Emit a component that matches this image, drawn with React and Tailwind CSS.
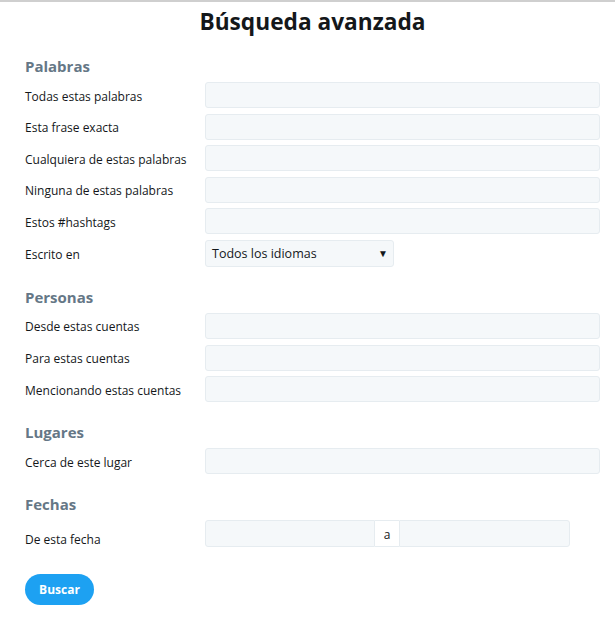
import React from "react";

const Field = ({ label }) => (
  <div className="flex items-center h-[26px]">
    <label className="w-[180px] shrink-0 pt-[3px] text-[12px] text-[#14171a]">{label}</label>
    <input
      type="text"
      className="flex-1 h-[26px] bg-[#f5f8fa] border border-[#e6ecf0] rounded-[3px] outline-none px-2 text-[12px]"
    />
  </div>
);

const Section = ({ title, children, first }) => (
  <section className={first ? "" : "mt-5"}>
    <h2 className="text-[15px] leading-[20px] font-bold text-[#657786] mb-[6px]">{title}</h2>
    <div className="flex flex-col gap-[5.6px]">{children}</div>
  </section>
);

const App = () => {
  return (
    <div
      className="min-h-screen bg-white border-t-2 border-[#cfcfcf]"
      style={{ fontFamily: '"Open Sans", "Noto Sans", sans-serif' }}
    >
      {/* Header */}
      <h1 className="mt-[6px] pl-[10px] text-center text-[22.7px] leading-[28px] font-bold text-[#14171a]">
        Búsqueda avanzada
      </h1>

      <form className="pl-[25px] pr-[15px] mt-5">
        <Section title="Palabras" first>
          <Field label="Todas estas palabras" />
          <Field label="Esta frase exacta" />
          <Field label="Cualquiera de estas palabras" />
          <Field label="Ninguna de estas palabras" />
          <Field label="Estos #hashtags" />
          <div className="flex items-center h-[27px]">
            <label className="w-[180px] shrink-0 pt-[3px] text-[12px] text-[#14171a]">Escrito en</label>
            <div className="w-[189px] h-[27px] bg-[#f5f8fa] border border-[#e6ecf0] rounded-[3px] flex items-center justify-between pl-[6px] pr-[5px]">
              <span className="pt-[2px] text-[12.5px] text-[#14171a]">Todos los idiomas</span>
              <span className="text-[10px] text-[#14171a]">▼</span>
            </div>
          </div>
        </Section>

        <Section title="Personas">
          <Field label="Desde estas cuentas" />
          <Field label="Para estas cuentas" />
          <Field label="Mencionando estas cuentas" />
        </Section>

        <Section title="Lugares">
          <Field label="Cerca de este lugar" />
        </Section>

        <Section title="Fechas">
          <div className="flex items-start">
            <label className="w-[180px] shrink-0 pt-[12px] text-[12px] leading-[16px] text-[#14171a]">
              De esta fecha
            </label>
            <div className="flex h-[27px]">
              <input
                type="text"
                className="w-[170px] h-[27px] bg-[#f5f8fa] border border-[#e6ecf0] rounded-l-[3px] outline-none"
              />
              <span className="w-[24px] h-[27px] bg-white border-y border-[#e6ecf0] flex items-center justify-center pt-[2px] text-[12px] text-[#14171a]">
                a
              </span>
              <input
                type="text"
                className="w-[171px] h-[27px] bg-[#f5f8fa] border border-[#e6ecf0] rounded-r-[3px] outline-none"
              />
            </div>
          </div>
        </Section>

        <button
          type="button"
          className="mt-[26px] w-[69px] h-[31px] rounded-full bg-[#1da1f2] text-white text-[12px] font-bold"
        >
          Buscar
        </button>
      </form>
    </div>
  );
};

export default App;
